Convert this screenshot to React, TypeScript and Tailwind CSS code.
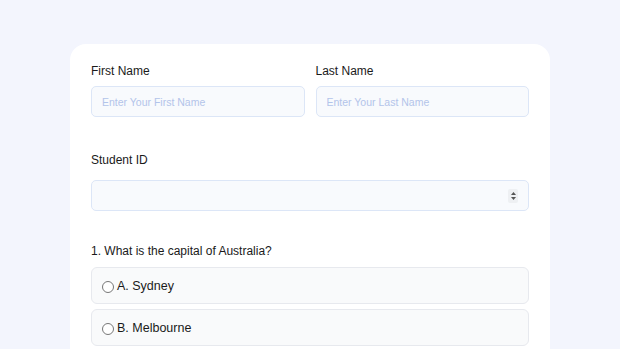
import React from 'react';

const font = { fontFamily: '"Liberation Sans", Arial, sans-serif' };

const Field = ({ label, placeholder }: { label: string; placeholder: string }) => (
  <div className="flex flex-col">
    <label className="text-[12px] leading-4 text-[#1a1a1a]">{label}</label>
    <input
      placeholder={placeholder}
      className="mt-[7px] h-[31px] rounded-[5px] border border-[#dce6f7] bg-[#f8fafd] px-[10px] text-[10.5px] outline-none placeholder:text-[#b3c4ea]"
    />
  </div>
);

const Option = ({ text }: { text: string }) => (
  <label className="flex h-[37px] items-center gap-[3px] rounded-[6px] border border-[#e7e9ee] bg-[#f9fafb] px-[10px] pt-[2px] text-[12.5px] text-[#1a1a1a]">
    <span className="h-[12px] w-[12px] rounded-full border border-[#777] bg-white" />
    {text}
  </label>
);

export default function App() {
  return (
    <div className="h-[349px] overflow-hidden bg-[#f3f5fd] px-[70px] pt-[44px]" style={font}>
      <div className="rounded-[16px] bg-white px-[21px] pt-[19px] pb-[24px]">
        <div className="grid grid-cols-2 gap-[11px]">
          <Field label="First Name" placeholder="Enter Your First Name" />
          <Field label="Last Name" placeholder="Enter Your Last Name" />
        </div>

        <div className="mt-[35px] flex flex-col">
          <label className="text-[12px] leading-4 text-[#1a1a1a]">Student ID</label>
          <div className="mt-[12px] flex h-[31px] items-center rounded-[5px] border border-[#dce6f7] bg-[#f8fafd] pr-[10px]">
            <input className="h-full flex-1 bg-transparent px-[10px] text-[11px] outline-none" />
            <div className="flex h-[14px] w-[10px] flex-col items-center justify-center gap-[2px] rounded-[2px] bg-[#eef0f3]">
              <svg width="5" height="3" viewBox="0 0 5 3"><path d="M2.5 0L5 3H0Z" fill="#555" /></svg>
              <svg width="5" height="3" viewBox="0 0 5 3"><path d="M0 0H5L2.5 3Z" fill="#555" /></svg>
            </div>
          </div>
        </div>

        <p className="mt-[32px] text-[12px] leading-4 text-[#1a1a1a]">1. What is the capital of Australia?</p>
        <div className="mt-[8px] flex flex-col gap-[5px]">
          <Option text="A. Sydney" />
          <Option text="B. Melbourne" />
        </div>
      </div>
    </div>
  );
}
